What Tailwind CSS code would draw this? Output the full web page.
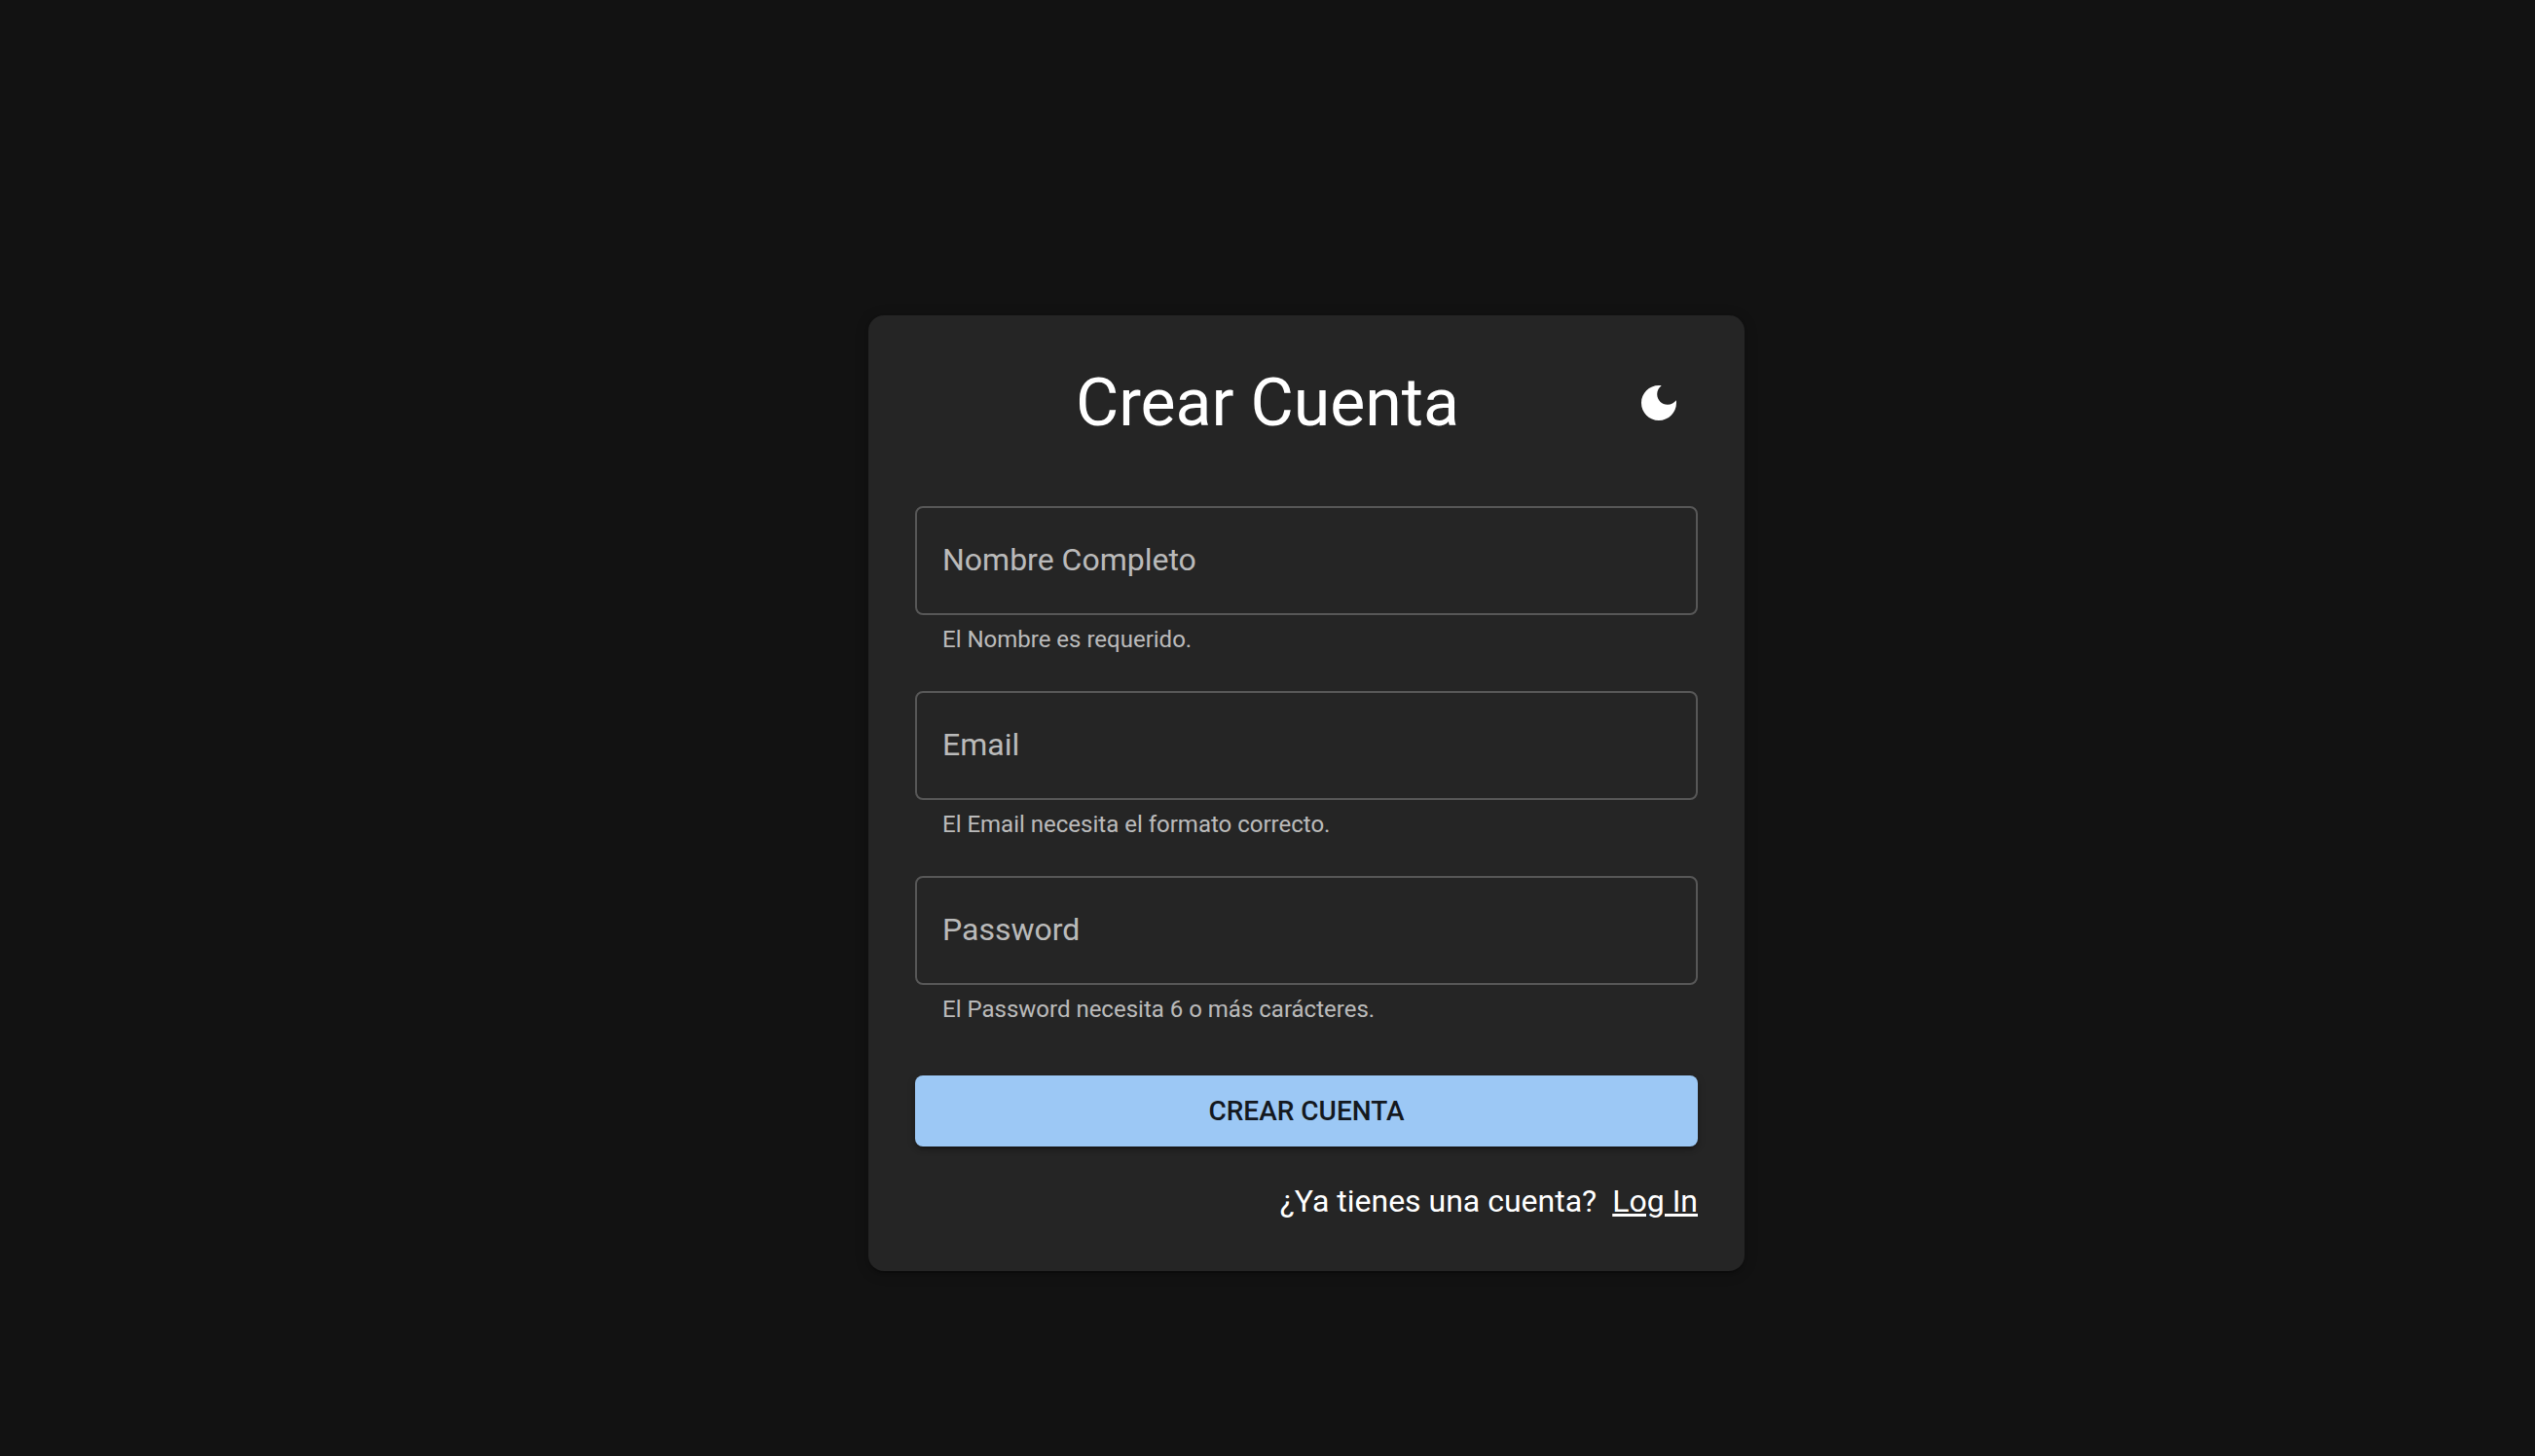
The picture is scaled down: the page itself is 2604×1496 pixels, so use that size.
<!DOCTYPE html>
<html lang="es">
<head>
<meta charset="utf-8">
<meta name="viewport" content="width=device-width, initial-scale=1">
<title>Crear Cuenta</title>
<script src="https://cdn.jsdelivr.net/npm/@tailwindcss/browser@4"></script>
</head>
<body class="bg-[#121212] font-[Roboto,sans-serif] text-white">
<main class="flex min-h-screen items-center justify-center pt-[134px] pl-20">
  <section class="w-full max-w-[900px] rounded-2xl bg-[#252525] p-12 shadow-[0_4px_2px_-2px_rgb(0_0_0/0.2),0_2px_4px_rgb(0_0_0/0.14),0_2px_16px_rgb(0_0_0/0.12)]">
    <header class="flex items-center">
      <h1 class="flex-1 text-center text-[68px] leading-[84px]">Crear Cuenta</h1>
      <button type="button" aria-label="Cambiar tema" class="rounded-full px-4">
        <svg class="size-12 fill-white" viewBox="0 0 24 24" aria-hidden="true"><path d="M12 3c-4.970 0-9 4.030-9 9s4.030 9 9 9 9-4.030 9-9c0-.46-.04-.92-.1-1.360-.98 1.370-2.580 2.260-4.400 2.260-2.980 0-5.400-2.420-5.400-5.400 0-1.810.89-3.420 2.260-4.400-.44-.06-.9-.1-1.360-.1z"/></svg>
      </button>
    </header>
    <form class="mt-16">
      <div class="flex flex-col gap-[34px]">
        <div>
          <div class="relative">
            <input id="nombre" type="text" placeholder=" " aria-describedby="nombre-ayuda" class="peer block h-28 w-full rounded-lg border-2 border-white/23 px-[26px] text-[32px] outline-none focus:border-[#9cc8f5]">
            <label for="nombre" class="pointer-events-none absolute inset-y-0 left-7 flex items-center pb-0.5 text-[32px] text-white/70 peer-[:not(:placeholder-shown)]:hidden">Nombre Completo</label>
          </div>
          <p id="nombre-ayuda" class="mx-7 mt-1.5 text-2xl leading-[38px] text-white/70">El Nombre es requerido.</p>
        </div>
        <div>
          <div class="relative">
            <input id="email" type="email" placeholder=" " aria-describedby="email-ayuda" class="peer block h-28 w-full rounded-lg border-2 border-white/23 px-[26px] text-[32px] outline-none focus:border-[#9cc8f5]">
            <label for="email" class="pointer-events-none absolute inset-y-0 left-7 flex items-center pb-0.5 text-[32px] text-white/70 peer-[:not(:placeholder-shown)]:hidden">Email</label>
          </div>
          <p id="email-ayuda" class="mx-7 mt-1.5 text-2xl leading-[38px] text-white/70">El Email necesita el formato correcto.</p>
        </div>
        <div>
          <div class="relative">
            <input id="password" type="password" placeholder=" " aria-describedby="password-ayuda" class="peer block h-28 w-full rounded-lg border-2 border-white/23 px-[26px] text-[32px] outline-none focus:border-[#9cc8f5]">
            <label for="password" class="pointer-events-none absolute inset-y-0 left-7 flex items-center pb-0.5 text-[32px] text-white/70 peer-[:not(:placeholder-shown)]:hidden">Password</label>
          </div>
          <p id="password-ayuda" class="mx-7 mt-1.5 text-2xl leading-[38px] text-white/70">El Password necesita 6 o más carácteres.</p>
        </div>
      </div>
      <button type="submit" class="mt-[49px] h-[73px] w-full rounded-lg bg-[#9cc8f5] text-[28px] font-medium text-[#14191f] uppercase shadow-[0_6px_2px_-4px_rgb(0_0_0/0.2),0_4px_4px_rgb(0_0_0/0.14),0_2px_10px_rgb(0_0_0/0.12)]">Crear Cuenta</button>
    </form>
    <p class="mt-8 flex justify-end gap-4 text-[32px] leading-[48px]">¿Ya tienes una cuenta? <a href="#" class="underline">Log In</a></p>
  </section>
</main>
</body>
</html>
